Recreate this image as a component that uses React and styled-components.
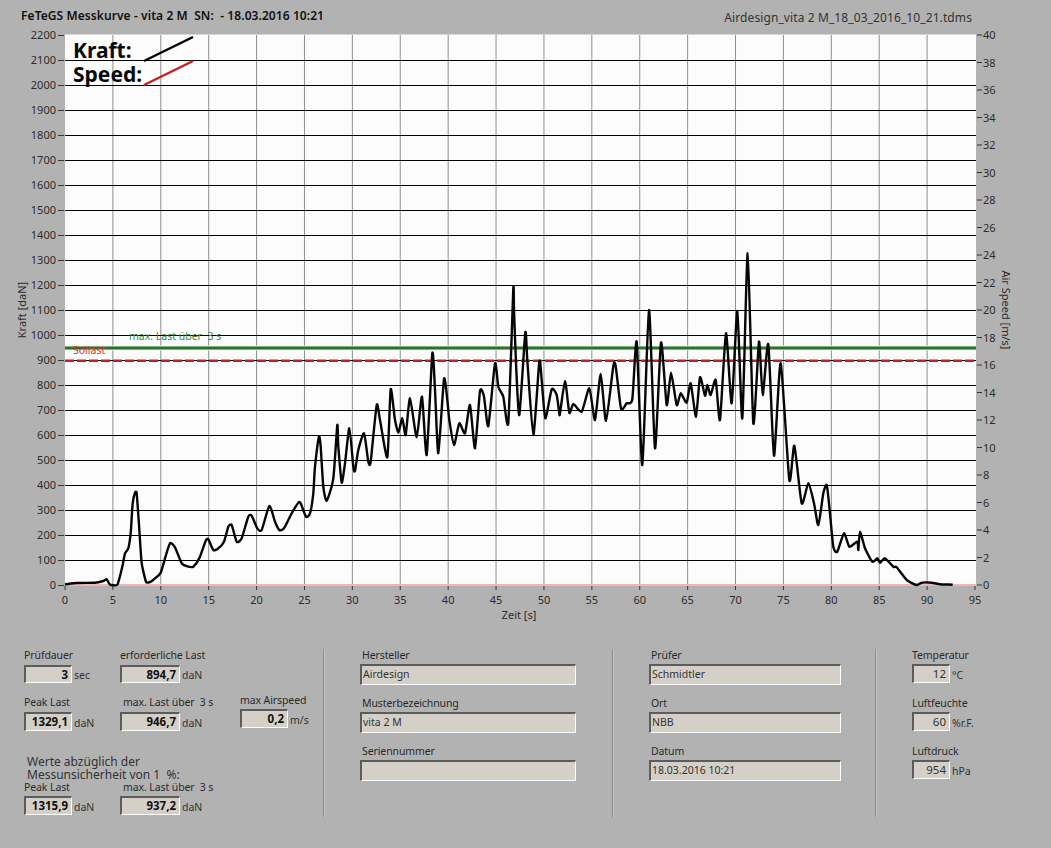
import styled, { createGlobalStyle } from "styled-components";

const GlobalStyle = createGlobalStyle`
  html, body {
    margin: 0;
    padding: 0;
    background: #b2b2b2;
    overflow: hidden;
  }
  body {
    font-family: "Noto Sans", "Liberation Sans", sans-serif;
    font-size: 11px;
    color: #2a2a2a;
  }
`;

const Page = styled.div`
  width: 1051px;
  height: 848px;
  display: flex;
  flex-direction: column;
`;

const Header = styled.header`
  height: 28px;
  display: flex;
  justify-content: space-between;
  padding: 8px 79px 0 21px;
  box-sizing: border-box;
`;

const Title = styled.div`
  font-size: 12px;
  letter-spacing: 0.08px;
  font-weight: 600;
  line-height: 15px;
  color: #111;
  white-space: pre;
`;

const FileName = styled.div`
  font-size: 12px;
  letter-spacing: 0.1px;
  line-height: 15px;
  margin-top: 2px;
  color: #333;
`;

const ChartSvg = styled.svg`
  display: block;
  width: 1051px;
  height: 612px;
  flex: none;

  text {
    font-family: "Noto Sans", "Liberation Sans", sans-serif;
    font-size: 11px;
    fill: #2c2c2c;
  }
`;

const LegendText = styled.text`
  && {
    font-size: 21px;
    font-weight: 700;
    fill: #0a0a0a;
  }
`;

const LimitText = styled.text`
  && {
    font-size: 10.5px;
    white-space: pre;
    fill: ${(p) => p.$color};
  }
`;

const Panel = styled.section`
  display: flex;
  padding: 9px 0 0 24px;
  align-items: flex-start;
`;

const Divider = styled.div`
  width: 2px;
  height: 168px;
  flex: none;
  background: #8b8b8b;
  border-right: 1px solid #c4c4c4;
  box-sizing: border-box;
`;

const MeasureColumn = styled.div`
  width: 299px;
  flex: none;
`;

const MeasureRow = styled.div`
  display: grid;
  grid-template-columns: 96px 120px auto;
  margin-top: ${(p) => p.$top || 0}px;
`;

const StatBox = styled.div`
  margin-top: ${(p) => p.$shift || 0}px;
`;

const Label = styled.div`
  height: 15px;
  line-height: 13px;
  font-size: 10.5px;
  letter-spacing: -0.1px;
  white-space: pre;
  color: #2a2a2a;
  padding-left: ${(p) => p.$indent || 0}px;
`;

const FieldRow = styled.div`
  display: flex;
  align-items: center;
  gap: 2px;
  margin-top: ${(p) => p.$gap ?? 1}px;
`;

const sunken = `
  box-sizing: border-box;
  background: #d4d0c8;
  border-style: solid;
  border-width: 2px 1px 1px 2px;
  border-color: #5c5c5c #ffffff #ffffff #5c5c5c;
  color: #111;
`;

const NumberField = styled.div`
  ${sunken}
  width: ${(p) => p.$width}px;
  height: ${(p) => p.$height || 19}px;
  line-height: ${(p) => (p.$height || 19) - 3}px;
  font-size: 11.5px;
  font-weight: ${(p) => (p.$plain ? 400 : 700)};
  color: ${(p) => (p.$plain ? "#333" : "#111")};
  text-align: right;
  padding-right: 3px;
`;

const Unit = styled.span`
  font-size: 10.5px;
  color: #333;
  margin-top: 2px;
`;

const Note = styled.div`
  font-size: 12px;
  line-height: 13px;
  margin: 24px 0 0 3px;
  color: #333;
  white-space: pre;
`;

const TextColumn = styled.div`
  width: ${(p) => p.$width}px;
  flex: none;
  box-sizing: border-box;
  padding-left: ${(p) => p.$pad}px;
  display: flex;
  flex-direction: column;
  gap: 12px;
`;

const TextField = styled.div`
  ${sunken}
  width: ${(p) => p.$width}px;
  height: 21px;
  line-height: 16px;
  font-size: 10.5px;
  padding-left: 1px;
  color: #333;
`;

const ClimateColumn = styled.div`
  padding-left: 35px;
  display: flex;
  flex-direction: column;
  gap: 14px;
`;

const PLOT = { left: 65, right: 976, top: 35, bottom: 585 };
const xAt = (t) => PLOT.left + (t * 910) / 95;
const yAt = (v) => PLOT.bottom - (v * (PLOT.bottom - PLOT.top)) / 2200;

// curve traced from crops of the reference, each with its own origin, 3x scale
const trace = (ox, oy, pts) =>
  pts.map(([x, y]) => [ox + x / 3, oy + y / 3]);

const curve = [
  ...trace(60, 450, [
    [15, 403], [50, 399], [105, 398], [130, 393], [140, 388], [150, 404], [172, 404],
    [182, 370], [188, 345], [195, 310], [205, 295], [212, 250], [218, 160], [225, 128],
    [230, 130], [236, 210], [240, 270], [245, 340], [258, 395], [270, 396], [285, 385],
    [302, 368], [315, 325], [330, 280], [345, 292], [365, 340], [385, 350], [400, 350],
    [418, 325], [437, 272], [445, 268], [460, 300], [475, 295], [492, 275], [505, 230],
    [515, 225], [530, 275], [545, 265], [565, 200], [575, 197], [592, 235], [605, 240],
    [628, 168], [645, 215], [658, 240], [672, 235], [695, 190], [715, 158], [722, 160],
    [738, 200], [750, 190], [760, 130],
  ]),
  ...trace(300, 340, [
    [45, 380], [57, 290], [62, 320], [70, 440], [80, 482], [100, 415], [112, 255],
    [115, 320], [125, 428], [135, 370], [148, 265], [160, 380], [165, 393], [175, 330],
    [192, 280], [205, 365], [212, 365], [230, 195], [240, 240], [262, 352], [272, 148],
    [285, 240], [295, 278], [307, 235], [317, 285], [330, 175], [350, 292], [366, 170],
    [380, 345], [397, 40], [405, 150], [415, 340],
  ]),
  ...trace(440, 280, [
    [12, 297], [22, 360], [28, 420], [42, 495], [58, 430], [75, 460], [90, 375],
    [105, 505], [120, 333], [132, 350], [145, 438], [165, 250], [175, 320], [190, 350],
    [205, 428], [220, 27], [222, 90], [228, 250], [238, 405], [256, 158], [262, 240],
    [280, 465], [298, 245], [305, 300], [316, 415], [335, 328], [350, 345], [358, 400],
  ]),
  ...trace(560, 300, [
    [0, 340], [15, 243], [28, 338], [40, 312], [65, 335], [88, 265], [105, 360],
    [122, 222], [138, 362], [160, 198], [167, 198], [183, 325], [200, 310], [217, 298],
    [230, 125], [247, 495], [267, 30], [285, 445], [303, 128], [320, 315], [333, 218],
    [350, 315], [362, 280], [380, 308], [392, 250], [408, 350], [420, 232],
  ]),
  ...trace(700, 245, [
    [15, 452], [22, 420], [32, 450], [47, 405], [60, 525], [78, 265], [95, 475],
    [112, 198], [127, 520], [143, 25], [160, 535], [177, 290], [188, 450], [205, 298],
    [222, 632], [242, 355], [268, 705], [283, 602], [305, 775],
  ]),
  ...trace(740, 450, [
    [205, 100], [222, 160], [235, 225], [250, 130], [260, 105], [268, 170], [280, 290],
    [292, 305], [312, 250], [328, 290], [352, 275], [355, 300], [360, 245], [375, 295],
    [397, 335], [412, 325], [420, 338], [435, 325], [460, 350], [470, 352], [500, 390],
    [530, 405], [545, 398], [575, 398], [600, 403], [638, 404],
  ]),
];

// soft catmull-rom through the traced points, the real curve has round peaks
const SOFTNESS = 10;
const smoothPath = (pts) => {
  let d = `M${pts[0][0].toFixed(1)} ${pts[0][1].toFixed(1)}`;
  for (let i = 0; i < pts.length - 1; i++) {
    const p0 = pts[Math.max(i - 1, 0)];
    const p1 = pts[i];
    const p2 = pts[i + 1];
    const p3 = pts[Math.min(i + 2, pts.length - 1)];
    const c1x = p1[0] + (p2[0] - p0[0]) / SOFTNESS;
    const c1y = p1[1] + (p2[1] - p0[1]) / SOFTNESS;
    const c2x = p2[0] - (p3[0] - p1[0]) / SOFTNESS;
    const c2y = p2[1] - (p3[1] - p1[1]) / SOFTNESS;
    d += `C${c1x.toFixed(1)} ${c1y.toFixed(1)} ${c2x.toFixed(1)} ${c2y.toFixed(1)} ${p2[0].toFixed(1)} ${p2[1].toFixed(1)}`;
  }
  return d;
};

const kraftTicks = Array.from({ length: 23 }, (_, i) => i * 100);
const speedTicks = Array.from({ length: 21 }, (_, i) => i * 2);
const timeTicks = Array.from({ length: 20 }, (_, i) => i * 5);

function Chart() {
  return (
    <ChartSvg viewBox="0 28 1051 612">
      <rect
        x={PLOT.left}
        y={PLOT.top - 0.5}
        width={PLOT.right - PLOT.left}
        height={PLOT.bottom - PLOT.top + 1}
        fill="#fcfcfc"
      />

      {timeTicks.map((t) => (
        <g key={t}>
          {t > 0 && t < 95 && (
            <line x1={xAt(t)} x2={xAt(t)} y1={PLOT.top} y2={PLOT.bottom} stroke="#8e8e8e" />
          )}
          <line x1={xAt(t)} x2={xAt(t)} y1={586} y2={590} stroke="#333" />
          <text x={xAt(t)} y={604} textAnchor="middle">
            {t}
          </text>
        </g>
      ))}

      {kraftTicks.map((v) => (
        <g key={v}>
          {v > 0 && v < 2200 && (
            <line
              x1={PLOT.left}
              x2={PLOT.right}
              y1={Math.round(yAt(v)) + 0.5}
              y2={Math.round(yAt(v)) + 0.5}
              stroke="#000"
            />
          )}
          <line
            x1={58}
            x2={64}
            y1={Math.round(yAt(v)) + 0.5}
            y2={Math.round(yAt(v)) + 0.5}
            stroke="#333"
          />
          <text x={56} y={yAt(v) + 4} textAnchor="end">
            {v}
          </text>
        </g>
      ))}

      {speedTicks.map((v) => (
        <g key={v}>
          <line x1={977} x2={982} y1={yAt(v * 55)} y2={yAt(v * 55)} stroke="#333" />
          <text x={983} y={yAt(v * 55) + 4}>
            {v}
          </text>
        </g>
      ))}

      <text transform="translate(26 310) rotate(-90)" textAnchor="middle">
        Kraft [daN]
      </text>
      <text transform="translate(1002 310) rotate(90)" textAnchor="middle">
        Air Speed [m/s]
      </text>
      <text x={519} y={619} textAnchor="middle">
        Zeit [s]
      </text>

      <line x1={PLOT.left} x2={PLOT.right} y1={585} y2={585} stroke="#f4b4b4" strokeWidth={2} />

      <line x1={PLOT.left} x2={PLOT.right} y1={348} y2={348} stroke="#e2f2e0" strokeWidth={5} />
      <line x1={PLOT.left} x2={PLOT.right} y1={348} y2={348} stroke="#2c702c" strokeWidth={3} />
      <line
        x1={PLOT.left}
        x2={PLOT.right}
        y1={360.7}
        y2={360.7}
        stroke="#c42020"
        strokeWidth={2.5}
        strokeDasharray="9 3"
      />
      <LimitText x={129} y={340} $color="#3f8a3f">
        max. Last über  3 s
      </LimitText>
      <LimitText x={73} y={354} $color="#d23a2a">
        Sollast
      </LimitText>

      <path
        d={smoothPath(curve)}
        fill="none"
        stroke="#060606"
        strokeWidth={2.4}
        strokeLinejoin="round"
      />

      <LegendText x={73} y={58}>
        Kraft:
      </LegendText>
      <LegendText x={73} y={82}>
        Speed:
      </LegendText>
      <line x1={144} y1={61} x2={193} y2={37} stroke="#000" strokeWidth={2.5} />
      <line x1={144} y1={85} x2={193} y2={61} stroke="#c42020" strokeWidth={2.5} />
    </ChartSvg>
  );
}

function Stat({ label, value, unit, width, height, indent, shift, gap, plain }) {
  return (
    <StatBox $shift={shift}>
      <Label $indent={indent}>{label}</Label>
      <FieldRow $gap={gap}>
        <NumberField $width={width} $height={height} $plain={plain}>
          {value}
        </NumberField>
        <Unit>{unit}</Unit>
      </FieldRow>
    </StatBox>
  );
}

function TextEntry({ label, value, width }) {
  return (
    <div>
      <Label $indent={2}>{label}</Label>
      <TextField $width={width}>{value}</TextField>
    </div>
  );
}

export default function App() {
  return (
    <Page>
      <GlobalStyle />
      <Header>
        <Title>FeTeGS Messkurve - vita 2 M  SN:  - 18.03.2016 10:21</Title>
        <FileName>Airdesign_vita 2 M_18_03_2016_10_21.tdms</FileName>
      </Header>
      <Chart />
      <Panel>
        <MeasureColumn>
          <MeasureRow>
            <Stat label="Prüfdauer" value="3" unit="sec" width={48} height={18} />
            <Stat label="erforderliche Last" value="894,7" unit="daN" width={60} height={18} />
          </MeasureRow>
          <MeasureRow $top={13}>
            <Stat label="Peak Last" value="1329,1" unit="daN" width={48} />
            <Stat label="max. Last über  3 s" value="946,7" unit="daN" width={60} indent={3} />
            <Stat label="max Airspeed" value="0,2" unit="m/s" width={48} shift={-2} gap={0} />
          </MeasureRow>
          <Note>{"Werte abzüglich der\nMessunsicherheit von 1  %:"}</Note>
          <MeasureRow>
            <Stat label="Peak Last" value="1315,9" unit="daN" width={48} gap={0} />
            <Stat label="max. Last über  3 s" value="937,2" unit="daN" width={60} indent={3} gap={0} />
          </MeasureRow>
        </MeasureColumn>
        <Divider />
        <TextColumn $width={287} $pad={35}>
          <TextEntry label="Hersteller" value="Airdesign" width={216} />
          <TextEntry label="Musterbezeichnung" value="vita 2 M" width={216} />
          <TextEntry label="Seriennummer" value="" width={216} />
        </TextColumn>
        <Divider />
        <TextColumn $width={261} $pad={35}>
          <TextEntry label="Prüfer" value="Schmidtler" width={192} />
          <TextEntry label="Ort" value="NBB" width={192} />
          <TextEntry label="Datum" value="18.03.2016 10:21" width={192} />
        </TextColumn>
        <Divider />
        <ClimateColumn>
          <Stat label="Temperatur" value="12" unit="°C" width={38} plain gap={0} />
          <Stat label="Luftfeuchte" value="60" unit="%r.F." width={38} plain gap={0} />
          <Stat label="Luftdruck" value="954" unit="hPa" width={38} plain gap={0} />
        </ClimateColumn>
      </Panel>
    </Page>
  );
}
